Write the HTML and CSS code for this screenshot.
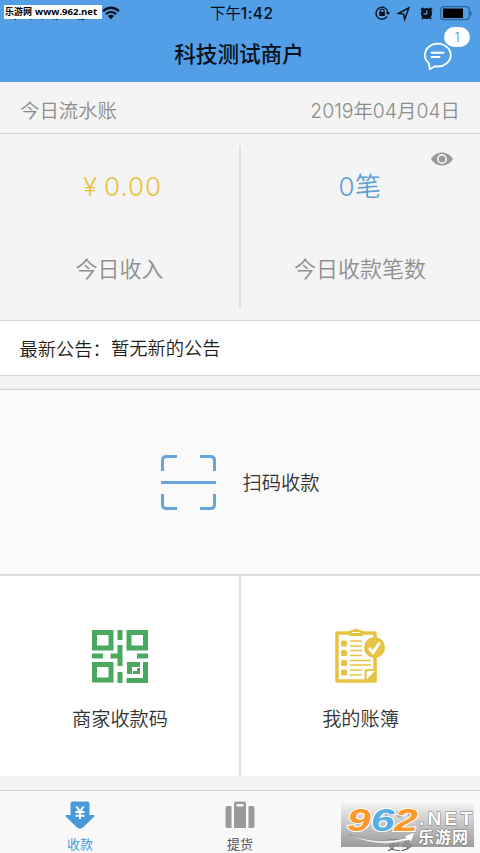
FILE: index.html
```html
<!DOCTYPE html>
<html lang="zh-CN">
<head>
<meta charset="utf-8">
<title>科技测试商户</title>
<link rel="stylesheet" href="styles.css">
</head>
<body>
<header class="header">
  <div class="status">
    <div class="status-left">
      <span class="carrier">中国移动</span>
      <span class="site-tag"><span class="site-name">乐游网</span><span class="site-url">www.962.net</span></span>
      <svg class="wifi" width="18" height="14" viewBox="0 0 18 14" fill="none" stroke="#071019" stroke-width="2.3"><path d="M1 5.2C5.6.6 12.400.6 17 5.200M3.900 8.200c3-2.900 7.200-2.900 10.200 0"/><path d="M9 13.200 5.900 10.100c1.800-1.700 4.400-1.700 6.200 0z" fill="#071019" stroke="none"/></svg>
    </div>
    <span class="clock">下午<b>1:42</b></span>
    <svg class="status-icons" width="98" height="18" viewBox="0 0 98 18" fill="none" stroke="#071019">
      <path d="M13.100 12.400A6 6 0 1 1 14 9" stroke-width="1.300"/><path d="m11.500 8.300 2.600 2.800 2.300-2.800z" fill="#071019" stroke="none"/>
      <path d="M6.300 8.500V7a1.900 1.900 0 0 1 3.800 0v1.500" stroke-width="1.200"/><path d="M5.300 8h5.500v4H5.300z" fill="#071019" stroke="none"/>
      <path d="m24.500 9.500 10.300-5.600-4.100 11.300-1-5.100z" stroke-width="1.500"/>
      <circle cx="52.500" cy="9.500" r="5.500" fill="#071019" stroke="none"/><path d="m46.900 6.200 2.500-2.300m6.200 0 2.500 2.300M49.300 13.500l-1.300 1.500m7.800-1.500 1.300 1.500" stroke-width="1.800"/><path d="M52.800 6.300v3.600h-3.300" stroke="#529fe8" stroke-width="1.100"/>
      <rect x="66.700" y="2.700" width="28.500" height="13" rx="3" stroke="#2f608e" stroke-width="1.200"/><path d="M69 4.500h20v9.500H69z" fill="#000" stroke="none"/><path d="M96.300 7c2 .5 2 4.500 0 5z" fill="#2f608e" stroke="none"/>
    </svg>
  </div>
  <h1 class="title">科技测试商户</h1>
  <div class="message">
    <svg width="30" height="30" viewBox="0 0 30 30" fill="none" stroke="#fff" stroke-width="1.800" stroke-linejoin="round" stroke-linecap="round"><path d="M6 21.400A12.900 11.400 0 1 1 12 24.200L6.700 27.200z"/><path d="M8.500 10.800h12M8.500 15.100h8" stroke-width="2"/></svg>
    <span class="badge">1</span>
  </div>
</header>
<main>
  <section class="date-bar"><span>今日流水账</span><time>2019年04月04日</time></section>
  <section class="stats">
    <div class="stat"><div class="amount yellow"><span class="yen">¥</span>0.00</div><div class="caption">今日收入</div></div>
    <div class="stat stat-count"><div class="amount blue">0笔</div><div class="caption">今日收款笔数</div>
      <svg class="eye" width="24" height="16" viewBox="0 0 24 16"><path d="M1 8c5-8.700 17-8.700 22 0-5 8.700-17 8.700-22 0z" fill="#999"/><circle cx="12" cy="8" r="4.200" fill="#999" stroke="#f4f4f4" stroke-width="1.700"/></svg>
    </div>
  </section>
  <section class="notice"><span>最新公告：</span><span class="notice-text">暂无新的公告</span></section>
  <section class="scan">
    <svg width="56" height="56" viewBox="0 0 56 56" fill="none" stroke="#68a5da" stroke-width="3"><path d="M2.500 17V6.500q0-4 4-4H17M40 2.500h10.500q4 0 4 4V17M2.500 40v10.500q0 4 4 4H17M40 54.500h10.500q4 0 4-4V40M1 28.500h55"/></svg>
    <span>扫码收款</span>
  </section>
  <section class="tiles">
    <div class="tile">
      <svg width="56" height="56" viewBox="0 0 56 56" fill="none" stroke="#4ba85f" stroke-width="5"><path d="M2.500 4.500H19v15.500H2.500zM37 4.500h16.500v15.500H37zM2.500 36.500H19v15.500H2.500zM28 2v10M28 17v21M18.500 28H28M0 28h11M45 28h11M28 44v11M37.500 46v-9.500H48M53.500 34v18.500h-19"/><path d="M41 44.500h5.500V40" stroke-width="3"/></svg>
      <span>商家收款码</span>
    </div>
    <div class="tile">
      <svg class="ledger" width="56" height="56" viewBox="0 0 56 56"><path d="M5 5h38v48H5z" fill="none" stroke="#e7c344" stroke-width="3.500" stroke-linejoin="round"/><path d="M17 8V4q0-2 3-2h1q3-3 6 0h1q3 0 3 2v4z" fill="#e7c344"/><path d="M20 4.500h8" stroke="#fff"/><g fill="#e7c344"><rect x="9" y="12.500" width="6" height="6" rx="1.500"/><rect x="9" y="22" width="6" height="6" rx="1.500"/><rect x="9" y="32" width="6" height="6" rx="1.500"/><rect x="9" y="41.500" width="6" height="6" rx="1.500"/></g><path d="M18 13h12m-12 5h12m-12 4.500h12m-12 5h12m-12 5h21m-21 4.500h21m-21 5h12m-12 5h12" stroke="#e7c344" stroke-width="1.300"/><path d="M32.500 54V44q0-3 3-3h9v13z" fill="#e7c344"/><path d="M34.500 51.500v-7q0-1.500 1.500-1.500h7z" fill="#fff"/><circle cx="42.500" cy="19.500" r="10.500" fill="#e7c344"/><path d="m37 20 4 4.500 6.700-10" fill="none" stroke="#fff" stroke-width="3"/></svg>
      <span>我的账簿</span>
    </div>
  </section>
</main>
<nav class="tabs">
  <div class="tab active"><svg width="30" height="28" viewBox="0 0 30 28"><path d="M8 .500h14q2.500 0 2.500 2.500v11h4q1.500.5.500 1.800L18.500 26q-3.500 3.300-7 0L1 15.800q-1-1.300.5-1.800h4V3q0-2.500 2.500-2.500z" fill="#489adc"/><path d="m11.300 5.500 3.700 5 3.700-5M15 10.500V18m-4.500-7h9m-9 3.700h9" fill="none" stroke="#fff" stroke-width="1.900"/></svg><span>收款</span></div>
  <div class="tab"><svg width="30" height="28" viewBox="0 0 30 28" fill="#999"><path d="M2.500 5H6.500v22H2.500Q.500 27 .500 25V7Q.500 5 2.500 5zM23.500 5h4q2 0 2 2v18q0 2-2 2h-4z"/><path d="M9 5V2.500Q9 .5 11 .5h8q2 0 2 2V27H9zm2.500-2v2.500h7V3z" fill-rule="evenodd"/></svg><span>提货</span></div>
  <div class="tab"><svg width="30" height="28" viewBox="0 0 30 28" fill="#999"><circle cx="4" cy="14" r="3"/><circle cx="15" cy="14" r="3"/><circle cx="26" cy="14" r="3"/></svg><span>更多</span></div>
</nav>
<svg class="watermark" width="133" height="44" viewBox="0 0 133 44">
  <defs><linearGradient id="plate" x2="0" y2="1"><stop stop-color="#f2f2f2" stop-opacity=".9"/><stop offset="1" stop-color="#858585" stop-opacity=".8"/></linearGradient></defs>
  <path d="M0 0h133v44H0z" fill="url(#plate)"/>
  <g fill="#a5a5a5"><circle cx="47" cy="11" r="3"/><circle cx="58" cy="11" r="3"/><circle cx="70" cy="11" r="3"/></g>
  <path d="M7 31q30 12 58 4l-2-2 11-4-4 10-2-2q-34 9-61-6z" fill="#fff" stroke="#777" stroke-width=".4"/>
  <text class="mark-number" x="6" y="28" textLength="71" lengthAdjust="spacingAndGlyphs"><tspan fill="#ff9829">9</tspan><tspan fill="#55aee5">6</tspan><tspan fill="#ff9829">2</tspan></text>
  <text class="mark-net" x="78" y="22" textLength="53" lengthAdjust="spacing">.NET</text>
  <text class="mark-cn" x="77" y="40" textLength="50">乐游网</text>
</svg>
</body>
</html>
```

FILE: styles.css
```css
* { box-sizing: border-box; }
body { margin: 0; width: 480px; height: 853px; overflow: hidden; display: flex; flex-direction: column; position: relative; background: #f4f4f4; color: #333; font-family: Inter, "Noto Sans CJK SC", sans-serif; font-weight: 350; }
svg { display: block; flex: none; }
.header { height: 82px; background: #529fe8; color: #071019; position: relative; flex: none; }
.status { height: 27px; display: grid; grid-template-columns: 1fr 60px 1fr; align-items: center; }
.status-left { display: flex; align-items: center; position: relative; height: 27px; padding-left: 102px; }
.carrier { position: absolute; left: 8px; top: 4px; font-size: 15px; line-height: 18px; letter-spacing: 6px; font-weight: 400; }
.site-tag { position: absolute; left: 4px; top: 5px; width: 98px; height: 14px; background: #fff; color: #000; display: flex; align-items: center; gap: 3px; padding-left: 1px; font-weight: 700; line-height: 14px; white-space: nowrap; }
.site-name { font-size: 9px; }
.site-url { font-family: "Open Sans", sans-serif; font-size: 9.5px; font-weight: 700; }
.wifi { margin-top: -1px; }
.clock { font-size: 15.4px; line-height: 27px; font-weight: 400; white-space: nowrap; }
.clock b { font-weight: 500; letter-spacing: .5px; }
.status-icons { justify-self: end; margin-right: 8px; margin-top: -1px; }
.title { margin: 10px 0 0; text-align: center; font-size: 21.6px; line-height: 34px; font-weight: 500; padding-right: 2px; }
.message { position: absolute; left: 423px; top: 42px; }
.badge { position: absolute; left: 21px; top: -15px; width: 26px; height: 20px; border-radius: 10px; background: #fff; color: #438dcc; text-align: center; font-size: 13px; line-height: 20px; }
main { flex: none; }
.date-bar { height: 52px; border-bottom: 1px solid #d2d2d2; padding: 3px 20px 0; display: flex; align-items: center; justify-content: space-between; font-size: 19.4px; color: #8c8c8c; }
.stats { height: 187px; border-bottom: 1px solid #d2d2d2; padding: 12px 0; display: grid; grid-template-columns: 1fr 1fr; text-align: center; }
.stat { height: 162px; padding-top: 24px; position: relative; }
.stat-count { border-left: 2px solid #e0e0e0; margin-left: -1px; }
.amount { font-size: 26px; line-height: 34px; }
.yen { margin-right: 6px; }
.yellow { color: #e8c23d; letter-spacing: .9px; padding-left: 5px; }
.blue { color: #5c9fd9; padding-right: 1px; letter-spacing: .4px; }
.caption { margin-top: 48px; font-size: 22px; line-height: 34px; color: #8f8f8f; padding-right: 1px; }
.eye { position: absolute; right: 26px; top: 5px; }
.notice { height: 55px; border-bottom: 1px solid #d2d2d2; background: #fff; padding-left: 19.5px; display: flex; align-items: center; font-size: 18.3px; color: #1d1d1d; }
.notice-text { margin-top: -2px; }
.scan { height: 187px; margin-top: 13px; border-top: 1px solid #d2d2d2; border-bottom: 2px solid #dedede; background: #fafafa; display: flex; align-items: center; justify-content: center; gap: 26px; font-size: 19.3px; }
.tiles { height: 200px; display: grid; grid-template-columns: 1fr 1fr; background: #fff; }
.tile { padding-top: 52px; display: flex; flex-direction: column; align-items: center; gap: 20px; font-size: 19.2px; line-height: 30px; }
.tile + .tile { border-left: 2px solid #e0e0e0; margin-left: -1px; }
.ledger { margin-left: -2px; }
.tabs { margin-top: 14px; height: 63px; flex: none; border-top: 1px solid #d0d0d0; background: #f9f9f9; display: grid; grid-template-columns: repeat(3, 1fr); }
.tab { padding-top: 10px; display: flex; flex-direction: column; align-items: center; gap: 5px; font-size: 13px; line-height: 20px; font-weight: 400; color: #555; }
.active { color: #489adc; }
.watermark { position: absolute; left: 341px; top: 803px; }
.mark-number { font: italic 700 32px "Liberation Sans", sans-serif; stroke: #fff; stroke-width: 2px; paint-order: stroke; }
.mark-net { font: 700 19px "Liberation Sans", sans-serif; fill: #fff; stroke: #777; stroke-width: 1px; paint-order: stroke; }
.mark-cn { font: 700 16px "Noto Sans CJK SC", sans-serif; fill: #fff; stroke: #777; stroke-width: 1px; paint-order: stroke; }
```
